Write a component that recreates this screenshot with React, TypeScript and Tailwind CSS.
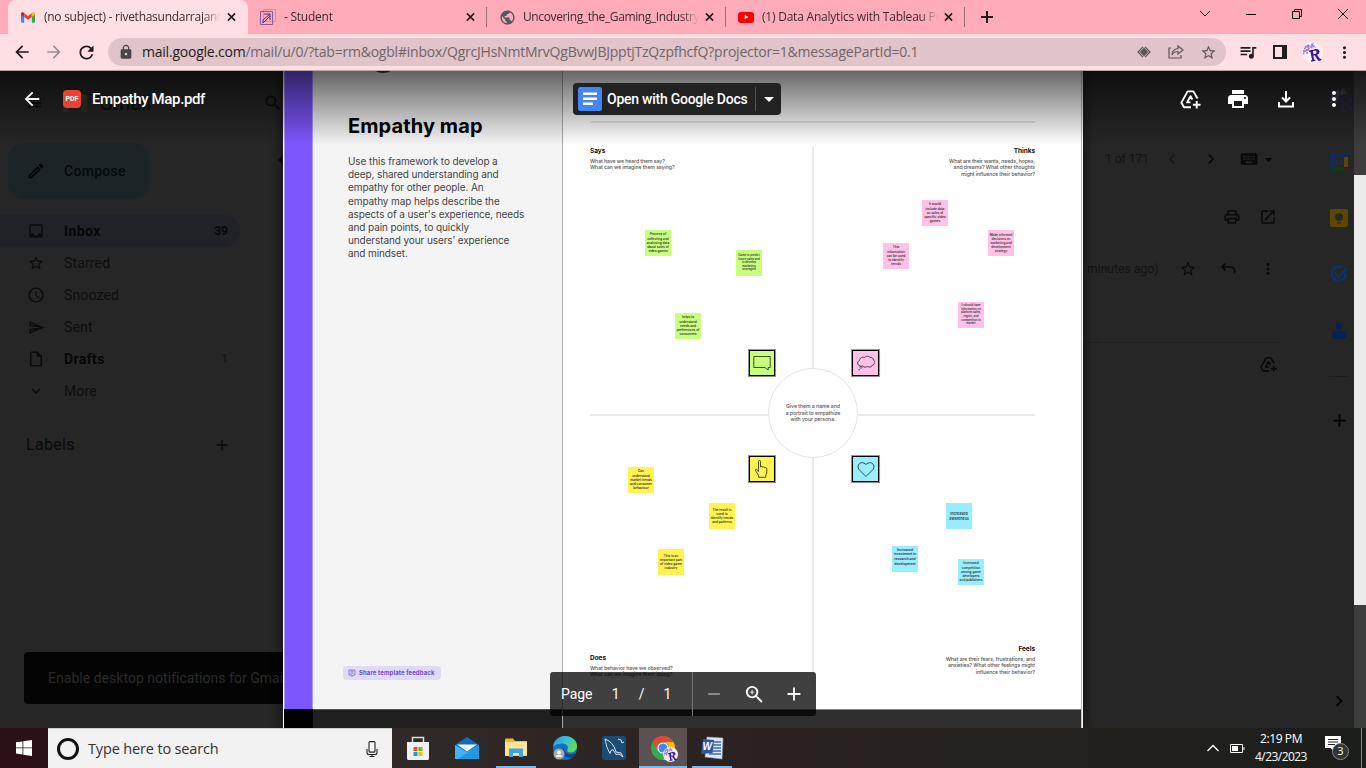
import type { ReactNode } from "react";
import { MdStarBorder, MdAccessTime, MdInbox, MdOutlineInsertDriveFile, MdPrint, MdLock, MdRefresh, MdArrowBack, MdArrowForward, MdMoreVert, MdChevronLeft, MdChevronRight, MdExpandMore, MdKeyboard, MdArrowDropDown, MdOpenInNew, MdAdd, MdRemove, MdZoomIn, MdOutlinePrint, MdPerson, MdPublic, MdMenu, MdSearch, MdOutlineEdit, MdPlayArrow, MdQueueMusic, MdOutlineSend } from "react-icons/md";

const SEGOE = "font-['Open_Sans','Noto_Sans',sans-serif]";
const ROBOTO = "font-[Roboto,'Liberation_Sans',sans-serif]";
const INTER = "font-[Inter,'Liberation_Sans',sans-serif]";

function GmailMark({ className }: { className: string }) {
  return (
    <svg viewBox="0 0 24 18" className={className}>
      <path d="M0 4v12.400C0 17.300.7 18 1.600 18h3.900V7z" fill="#4285f4" />
      <path d="M18.500 18h3.900c.9 0 1.600-.7 1.600-1.600V4l-5.500 3z" fill="#34a853" />
      <path d="M18.500 1.600v6.600L24 4.100V2.500c0-2-2.300-3.200-3.900-2z" fill="#fbbc04" />
      <path d="M5.500 8.200V1.600L12 6.500l6.500-4.900v6.600L12 13z" fill="#ea4335" />
      <path d="M0 2.500v1.600l5.500 4.100V1.600L3.900.5C2.300-.7 0 .5 0 2.500z" fill="#c5221f" />
    </svg>
  );
}

function RLetter({ className }: { className: string }) {
  return (
    <svg viewBox="0 0 22 22" className={className}>
      <g fill="none" stroke="#9b7fc9" strokeWidth="1.600">
        <path d="M2 13c-1-4 1-8 5-8M4 6l-1-2M7 5l0-3M10 4l2-3M4 9l4-3M5 12l2-5M9 6l4-2" strokeDasharray="2 .7" />
        <path d="M6 4l6 1M3 9l3 3M10 2l4 4M2 10l5-2M5 3l3 4" strokeDasharray="1.500 1" />
      </g>
      <path d="M7.500 9l6-1.500c3-.7 4.500.5 4.800 2.200.3 1.800-.9 3-2.600 3.600l3.100 4.300 1.400.1.200 1.300-3.200.8-4-5.800-1.300.3.800 4.200 1.400 0 .2 1.200-4.700 1-.2-1.200 1.200-.6-1.700-8.300-1.400 0zM11.400 9.500l.7 3.400 1.500-.4c1.200-.3 1.800-1 1.500-2-.2-1.100-1-1.500-2.200-1.300z" fill="#3c14a8" />
    </svg>
  );
}

function DriveAdd({ className }: { className: string }) {
  return (
    <svg viewBox="0 0 24 24" className={className} fill="none" stroke="currentColor" strokeWidth="2" strokeLinejoin="round">
      <path d="M12.500 20H5.200L2.500 15.300 9 3.500h6l4.300 7.500" />
      <path d="M12 15H8.500L12 8.500l2 3.500" />
      <path d="M18.500 13.500v8M14.500 17.500h8" />
    </svg>
  );
}

function CloseX() {
  return (
    <svg viewBox="0 0 10 10" className="h-2.5 w-[9px] shrink-0" stroke="#26181b" strokeWidth="1.700">
      <path d="M1 1l8 8M9 1l-8 8" />
    </svg>
  );
}

function Tab({ icon, title, active = false, width }: { icon: ReactNode; title: ReactNode; active?: boolean; width: string }) {
  return (
    <div className={`${width} relative flex h-[34px] shrink-0 items-center pl-[11px] pr-3 ${active ? "rounded-t-lg bg-[#ffdfe4]" : ""}`}>
      <div className="flex w-[18px] shrink-0 items-center justify-center">{icon}</div>
      <div className={`ml-[7px] mr-1.5 flex-1 overflow-hidden whitespace-nowrap text-[12px] leading-[18px] text-[#3c2c30] [mask-image:linear-gradient(to_right,black_90%,transparent)] ${SEGOE}`}>{title}</div>
      <CloseX />
      {!active && <span className="absolute right-0 top-[7px] h-5 w-px bg-[#9c6d76]" />}
    </div>
  );
}

function TabStrip() {
  return (
    <div className="flex h-[34px] shrink-0 bg-[#ffabb9] pl-2">
      <Tab
        active
        width="w-[240px]"
        icon={<GmailMark className="h-[11px] w-[14px]" />}
        title={<span className="tracking-[-0.27px]">(no subject) - rivethasundarrajan@gmail.com</span>}
      />
      <Tab
        width="w-[239px]"
        icon={
          <svg viewBox="0 0 16 16" className="size-4" fill="none">
            <path d="M3.500.5h12v12h-12z" stroke="#6cb6e0" />
            <path d="M.5 2.500h12v13H.5z" stroke="#8a5a98" />
            <path d="M4 5h6v6M10 5l-7 6v3l7-7" stroke="#3b3a78" />
          </svg>
        }
        title={<span className="tracking-[-0.25px]">- Student</span>}
      />
      <Tab width="w-[239px]" icon={<MdPublic className="size-[17px] text-[#55595e]" />} title={<span className="tracking-[-0.38px]">Uncovering_the_Gaming_Industry</span>} />
      <Tab
        width="w-[239px]"
        icon={
          <span className="flex h-[11px] w-4 items-center justify-center rounded-[3px] bg-[#f00]">
            <MdPlayArrow className="size-2 text-white" />
          </span>
        }
        title={<span className="tracking-[-0.22px]">(1) Data Analytics with Tableau Project</span>}
      />
      <div className="flex w-[44px] items-center justify-center">
        <svg viewBox="0 0 12 12" className="size-3" stroke="#26181b" strokeWidth="2"><path d="M6 0v12M0 6h12" /></svg>
      </div>
      <div className="ml-auto flex h-7 w-[184px]">
        <div className="flex flex-1 items-center justify-center"><svg viewBox="0 0 12 8" className="h-2 w-3" fill="none" stroke="#111"><path d="M1 1l5 5 5-5" /></svg></div>
        <div className="flex flex-1 items-center justify-center"><span className="h-px w-2.5 bg-black" /></div>
        <div className="flex flex-1 items-center justify-center"><svg viewBox="0 0 10 10" className="size-2.5" fill="none" stroke="#111"><path d="M.5 2.500h7v7h-7zM2.500 2.500v-2h7v7h-2" /></svg></div>
        <div className="flex flex-1 items-center justify-center"><svg viewBox="0 0 10 10" className="size-2.5" stroke="#111"><path d="M0 0l10 10M10 0L0 10" /></svg></div>
      </div>
    </div>
  );
}

function Toolbar() {
  return (
    <div className="flex h-[37px] shrink-0 items-center border-b border-[#b9a3a6] bg-[#ffdfe4] pl-1.5">
      <div className="flex w-8 shrink-0 justify-center"><MdArrowBack className="size-5 text-[#1f1a1c]" /></div>
      <div className="flex w-8 shrink-0 justify-center"><MdArrowForward className="size-5 text-[#a18e92]" /></div>
      <div className="flex w-8 shrink-0 justify-center"><MdRefresh className="size-[21px] text-[#1f1a1c]" /></div>
      <div className="ml-1.5 flex h-7 w-[1118px] shrink-0 items-center rounded-full bg-[#e0c4c9] pl-2.5">
        <MdLock className="size-4 text-[#4a4446]" />
        <div className={`ml-2 whitespace-nowrap text-[14px] leading-5 tracking-[-0.22px] text-[#71636a] ${SEGOE}`}>
          <span className="text-[#1f1a1c]">mail.google.com</span>/mail/u/0/?tab=rm&amp;ogbl#inbox/QgrcJHsNmtMrvQgBvwJBJpptjTzQzpfhcfQ?projector=1&amp;messagePartId=0.1
        </div>
        <div className="ml-auto flex items-center pr-0.5 text-[#5f5559]">
          <div className="flex w-8 justify-center">
            <svg viewBox="0 0 14 12" className="h-3 w-3.5" fill="none" stroke="currentColor" strokeWidth="1.200"><path d="M6 .8L1 6l5 5.200M8 .8L13 6l-5 5.200" /><path d="M7 2.500L10.500 6 7 9.500 3.500 6z" fill="currentColor" /></svg>
          </div>
          <div className="flex w-8 justify-center">
            <svg viewBox="0 0 16 14" className="h-3.5 w-4" fill="none" stroke="currentColor" strokeWidth="1.200"><path d="M3 3H1v10h12v-3M10 1l5 4-5 4V6.500C7 6.500 5 7.500 4 10c0-4 2-6 6-6.500z" /></svg>
          </div>
          <div className="flex w-8 justify-center"><MdStarBorder className="size-[17px]" /></div>
        </div>
      </div>
      <div className="ml-1.5 flex items-center text-[#241d20]">
        <div className="flex w-8 justify-center"><MdQueueMusic className="size-5" /></div>
        <div className="flex w-8 justify-center">
          <svg viewBox="0 0 14 14" className="size-3.5"><path d="M1 1h12v12H1z" fill="none" stroke="currentColor" strokeWidth="2" /><path d="M9 1h4v12H9z" fill="currentColor" /></svg>
        </div>
        <div className="flex w-8 justify-center"><span className="size-[21px] rounded-full bg-[#f7f2f6]"><RLetter className="size-[21px]" /></span></div>
        <div className="flex w-8 justify-center"><MdMoreVert className="size-[19px]" /></div>
      </div>
    </div>
  );
}

function FolderRow({ icon, label, count, active = false, bold = false }: { icon: ReactNode; label: string; count?: string; active?: boolean; bold?: boolean }) {
  return (
    <div className={`flex h-8 w-[240px] items-center rounded-r-full pl-[27px] pr-3 text-[14px] leading-5 ${active ? "bg-[#202227]" : ""} ${bold ? "font-bold text-[#070708]" : "text-[#0e0e0f]"} ${ROBOTO}`}>
      <span className="flex w-[18px] justify-center text-[#0b0b0c]">{icon}</span>
      <span className={`ml-[19px] ${bold ? "tracking-[0.4px]" : "tracking-[0.15px]"}`}>{label}</span>
      {count && <span className={`ml-auto text-[12px] ${active ? "" : "font-normal text-[#101010]"}`}>{count}</span>}
    </div>
  );
}

function MailSidebar() {
  return (
    <aside className="flex w-[283px] shrink-0 flex-col overflow-hidden bg-[#262626]">
      <div className="flex h-16 items-center pl-[26px]">
        <MdMenu className="size-5 text-[#080808]" />
        <GmailMark className="ml-5 h-5 w-7 opacity-15" />
        <span className={`ml-3 text-[20px] text-[#0e0e0e] ${ROBOTO}`}>Gmail</span>
        <MdSearch className="ml-[112px] size-5 shrink-0 text-[#0a0a0a]" />
      </div>
      <div className="mt-2 flex items-start justify-between">
        <div className={`ml-2 flex h-14 w-[142px] items-center rounded-2xl bg-[#1d2428] pl-[18px] text-[14px] font-medium tracking-[0.3px] text-[#05090b] ${ROBOTO}`}>
          <MdOutlineEdit className="size-5 text-black" />
          <span className="ml-[18px]">Compose</span>
        </div>
        <MdArrowBack className="-mr-2.5 mt-2 size-[18px] text-[#090909]" />
      </div>
      <nav className="mt-4">
        <FolderRow active bold icon={<MdInbox className="size-[18px]" />} label="Inbox" count="39" />
        <FolderRow icon={<MdStarBorder className="size-[18px]" />} label="Starred" />
        <FolderRow icon={<MdAccessTime className="size-[18px]" />} label="Snoozed" />
        <FolderRow icon={<MdOutlineSend className="size-[17px]" />} label="Sent" />
        <FolderRow icon={<MdOutlineInsertDriveFile className="size-[18px]" />} label="Drafts" count="1" bold />
        <FolderRow icon={<MdExpandMore className="size-[18px]" />} label="More" />
      </nav>
      <div className={`mt-[27px] flex h-[22px] w-[231px] items-center justify-between pl-[26px] text-[16px] tracking-[0.3px] text-[#0a0a0a] ${ROBOTO}`}>
        <span>Labels</span>
        <MdAdd className="size-[18px]" />
      </div>
      <div className={`ml-6 mt-[196px] flex h-[52px] w-[300px] items-center whitespace-nowrap rounded bg-[#040404] pl-6 text-[14px] tracking-[0.03px] text-[#2a2a2a] ${ROBOTO}`}>
        Enable desktop notifications for Gmail
      </div>
    </aside>
  );
}

function MailPane() {
  return (
    <section className={`flex w-[271px] shrink-0 bg-[#262626] text-[#090909] ${ROBOTO}`}>
      <div className="w-[228px] pt-[76px]">
        <div className="flex h-6 items-center pl-[22px]">
          <span className="w-[56px] text-[12px] text-[#141414]">1 of 171</span>
          <MdChevronLeft className="ml-px size-5 text-[#161616]" />
          <MdChevronRight className="ml-[19px] size-5" />
          <MdKeyboard className="ml-[18px] size-5" />
          <MdArrowDropDown className="size-[19px]" />
        </div>
        <div className="mt-[34px] flex h-6 items-center justify-end gap-[18px] pr-[34px]">
          <MdOutlinePrint className="size-[18px]" />
          <MdOpenInNew className="size-[18px]" />
        </div>
        <div className="mt-7 flex h-6 items-center pl-1">
          <span className="w-[88px] whitespace-nowrap text-[12px] tracking-[0.1px] text-[#121212]">minutes ago)</span>
          <MdStarBorder className="ml-1 size-[18px]" />
          <svg viewBox="0 0 16 14" className="ml-[23px] h-3.5 w-4" fill="none" stroke="currentColor" strokeWidth="1.700"><path d="M5.500 1.500L2 5l3.500 3.500M2 5h8.500c2.500 0 4 1.500 4 4v2.500" /></svg>
          <MdMoreVert className="ml-[23px] size-[18px]" />
        </div>
        <div className="mr-8 mt-[61px] border-t border-dotted border-[#1b1b1b]" />
        <div className="mt-3 flex justify-end pr-[33px]"><DriveAdd className="size-[19px]" /></div>
      </div>
      <div className="flex w-[43px] flex-col items-center pl-[13px] pt-[82px]">
        <svg viewBox="0 0 18 18" className="size-[18px]">
          <path d="M0 0h18v4H0z" fill="#102a59" /><path d="M0 4h4v10H0z" fill="#102a59" /><path d="M14 4h4v10h-4z" fill="#5c4603" /><path d="M0 14h14v4H0z" fill="#0d3a1a" /><path d="M14 14h4l-4 4z" fill="#4a1511" />
          <text x="9" y="12" textAnchor="middle" fontSize="8" fontFamily="Roboto" fill="#14346c">31</text>
        </svg>
        <svg viewBox="0 0 18 18" className="mt-[38px] size-[18px]"><rect width="18" height="18" rx="2" fill="#5c4702" /><circle cx="9" cy="8" r="4" fill="#2e2a18" /><path d="M7 13h4v1.500H7z" fill="#2e2a18" /></svg>
        <svg viewBox="0 0 18 18" className="mt-[38px] size-[18px]" fill="none" stroke="#103260" strokeWidth="2.500"><path d="M15.500 7.500A7 7 0 1 1 12.500 3" /><path d="M5 8l4 4 8-9" /></svg>
        <svg viewBox="0 0 14 18" className="mt-[39px] h-[18px] w-3.5" fill="#082155"><circle cx="7" cy="4" r="3.500" /><path d="M3 9h8c2 0 3 1.500 3 3.500V15c0 1-.7 2-2 2H2c-1.300 0-2-1-2-2v-2.500C0 10.500 1 9 3 9z" /></svg>
        <span className="mt-9 h-px w-5 bg-[#1d1d1d]" />
        <MdAdd className="mt-[33px] size-[21px] shrink-0 text-black" />
        <MdChevronRight className="mt-[259px] size-[22px] shrink-0 text-black" />
      </div>
    </section>
  );
}

type Note = { pos: string; lines: string[]; size?: string };

const GREEN: Note[] = [
  { pos: "left-[82px] top-[159px]", lines: ["Process of", "collecting and", "analysing data", "about sales of", "video games"] },
  { pos: "left-[173px] top-[179px]", size: "text-[2.8px] leading-[3.6px]", lines: ["Game to predict", "future sales and", "to develop", "marketing", "strategies"] },
  { pos: "left-[112px] top-[242px]", lines: ["helps to", "understand", "needs and", "preferences of", "consumers"] },
];
const PINK: Note[] = [
  { pos: "left-[359px] top-[129px]", lines: ["It would", "include data", "on sales of", "specific video", "games"] },
  { pos: "left-[425px] top-[159px]", size: "text-[3.1px] leading-[4.1px]", lines: ["Make informed", "decisions on", "marketing and", "development", "strategy"] },
  { pos: "left-[320px] top-[172px]", lines: ["This", "information", "can be used", "to identify", "trends"] },
  { pos: "left-[395px] top-[231px]", size: "text-[2.8px] leading-[3.6px]", lines: ["It should have", "information on", "platform sales,", "region, and", "competition in", "market"] },
];
const YELLOW: Note[] = [
  { pos: "left-[65px] top-[396px]", lines: ["Can", "understand", "market trends", "and consumer", "behaviour"] },
  { pos: "left-[146px] top-[432px]", lines: ["The result is", "used to", "identify trends", "and patterns"] },
  { pos: "left-[95px] top-[478px]", lines: ["This is an", "important part", "of video game", "industry"] },
];
const CYAN: Note[] = [
  { pos: "left-[383px] top-[432px]", size: "text-[3.7px] leading-[5px]", lines: ["Increased", "awareness"] },
  { pos: "left-[329px] top-[475px]", size: "text-[3.4px] leading-[4.6px] pb-1", lines: ["Increased", "investment in", "research and", "development"] },
  { pos: "left-[395px] top-[488px]", size: "text-[3.2px] leading-[4.2px]", lines: ["Increased", "competition", "among game", "developers", "and publishers"] },
];

function Notes({ items, color }: { items: Note[]; color: string }) {
  return (
    <>
      {items.map((n) => (
        <div key={n.pos} className={`absolute flex size-[26px] flex-col items-center justify-center whitespace-nowrap font-semibold text-[#333] ${n.pos} ${color} ${n.size ?? "text-[3.2px] leading-[4.2px]"}`}>
          {n.lines.map((l) => <span key={l}>{l}</span>)}
        </div>
      ))}
    </>
  );
}

function Tile({ pos, children }: { pos: string; children: ReactNode }) {
  return (
    <div className={`absolute flex h-[26px] items-center justify-center border border-black shadow-sm outline-[0.5px] outline-black/40 ${pos}`}>
      <svg viewBox="0 0 18 18" className="size-[18px]" fill="none" stroke="#222" strokeWidth=".8">{children}</svg>
    </div>
  );
}

function Corner({ pos, title, lines }: { pos: string; title: string; lines: string[] }) {
  return (
    <div className={`absolute whitespace-nowrap text-[5.2px] font-medium leading-[6.7px] tracking-[-0.09px] text-[#555] ${pos}`}>
      <div className="mb-[2.5px] text-[6.5px] font-bold leading-[8px] tracking-[-0.05px] text-[#111]">{title}</div>
      {lines.map((l) => <div key={l}>{l}</div>)}
    </div>
  );
}

function PdfPage() {
  return (
    <main className={`z-[1] flex w-[800px] shrink-0 border-x border-white bg-white shadow-[0_0_10px_2px_rgba(0,0,0,0.45)] ${INTER}`}>
      <div className="w-[29px] shrink-0">
        <div className="h-[638px] border-x border-[#a995ff] bg-[#7b57fe]" />
        <div className="h-[19px] bg-black" />
      </div>
      <div className="flex w-[249px] shrink-0 flex-col bg-[#f4f4f4]">
        <div className="relative flex h-[638px] flex-col overflow-hidden pl-[35px] pt-[42px]">
          <span className="absolute left-[55px] top-[-28px] size-[30px] rounded-full bg-[#35325e]" />
          <h1 className="text-[20px] font-bold leading-[26px] tracking-[0.1px] text-black">Empathy map</h1>
          <p className="mt-[16px] whitespace-pre text-[10px] leading-[13.2px] tracking-[-0.1px] text-[#444]">
            {"Use this framework to develop a\ndeep, shared understanding and\nempathy for other people. An\nempathy map helps describe the\naspects of a user's experience, needs\nand pain points, to quickly\nunderstand your users’ experience\nand mindset."}
          </p>
          <div className="mb-[29px] ml-[-5px] mt-auto flex h-3.5 w-[98px] items-center rounded-sm bg-[#e0daf6] pl-[5px] text-[#6b4ed0]">
            <svg viewBox="0 0 8 8" className="size-2" fill="none" stroke="currentColor" strokeWidth=".7"><path d="M1 1h6v5H5.500L4 7.500V6H1zM2.500 2.700h3M2.500 4.200h3" /></svg>
            <span className="ml-[3px] whitespace-nowrap text-[6px] font-bold leading-[8px] tracking-[0.1px]">Share template feedback</span>
          </div>
        </div>
        <div className="h-[19px] border-t border-[#555] bg-[#1f1f1f]" />
      </div>
      <div className="w-px shrink-0 bg-[#aaa]" />
      <div className="flex flex-1 flex-col">
        <div className="relative h-[638px] bg-white">
          <span className="absolute left-[27px] top-[50px] h-[2px] w-[445px] bg-[#e6e6e6]" />
          <span className="absolute left-[249px] top-[75px] h-[540px] w-[2px] bg-[#e9e9e9]" />
          <span className="absolute left-[27px] top-[343px] h-[2px] w-[445px] bg-[#e9e9e9]" />
          <div className="absolute left-[205px] top-[297px] flex size-[90px] items-center justify-center whitespace-pre rounded-full border-[1.5px] border-[#e4e4e4] bg-white text-center text-[5.2px] font-medium leading-[6.6px] tracking-[-0.06px] text-[#555]">
            {"Give them a name and\na portrait to empathize\nwith your persona."}
          </div>
          <Corner pos="left-[27px] top-[76px]" title="Says" lines={["What have we heard them say?", "What can we imagine them saying?"]} />
          <Corner pos="right-[46px] top-[76px] text-right" title="Thinks" lines={["What are their wants, needs, hopes,", "and dreams? What other thoughts", "might influence their behavior?"]} />
          <Corner pos="left-[27px] top-[583px]" title="Does" lines={["What behavior have we observed?", "What can we imagine them doing?"]} />
          <Corner pos="right-[46px] top-[574px] text-right" title="Feels" lines={["What are their fears, frustrations, and", "anxieties? What other feelings might", "influence their behavior?"]} />
          <Notes items={GREEN} color="bg-[#c8ff7d]" />
          <Notes items={PINK} color="bg-[#ffc1e8]" />
          <Notes items={YELLOW} color="bg-[#fff352]" />
          <Notes items={CYAN} color="bg-[#98edff]" />
          <Tile pos="left-[186px] top-[279px] w-[26px] bg-[#c8ff7d]"><path d="M.8 2.500h16.400v11h-2V16L12 13.500H.8z" /></Tile>
          <Tile pos="left-[289px] top-[279px] w-[27px] bg-[#ffc1e8]"><path d="M3 12C0 11 0 7.500 2.500 6.500 2.500 4 5.500 2.500 7.500 3.500c1.500-2 5-1.500 5.500 0 2-.3 3.500.8 3.300 2.500 2.500 1.200 1.800 4.500-.8 5-.5 2-3.200 2.500-5 1.500-1.500 1-3.800.8-4.800-.5-.9.3-2 .3-2.700 0zM4 12.300l1 1.200-1 1-1-1zM1.500 15.700h1.500" /></Tile>
          <Tile pos="left-[186px] top-[385px] w-[26px] bg-[#fff352]"><path d="M5.500 9.500V1.500c0-1.400 2-1.400 2 0V7c.5-.9 2-.8 2.200.3.500-.8 1.900-.6 2.100.4.6-.6 2-.2 2 1V13l-1 2v2.300H5.500V15.300L2.500 10.500c-.6-1.200.8-1.800 1.500-1l1.500 2z" /></Tile>
          <Tile pos="left-[289px] top-[385px] w-[27px] bg-[#98edff]"><path d="M9 16.500L2 9.500C-.8 6 3-.5 9 4.500c6-5 9.800 1.500 7 5z" /></Tile>
        </div>
        <div className="h-[19px] border-t border-[#888] bg-[#2f2f2f]" />
      </div>
      <div className="w-px shrink-0 bg-[#bbb]" />
    </main>
  );
}

function ViewerHeader() {
  return (
    <header className={`absolute inset-x-0 top-0 z-10 flex h-[74px] items-start bg-linear-to-b from-black/60 to-transparent text-white ${ROBOTO}`}>
      <div className="flex h-14 w-[573px] items-center pl-[21px]">
        <MdArrowBack className="size-[22px]" />
        <span className="ml-[20px] flex h-[18px] w-[18px] items-center justify-center rounded-sm bg-[#ea4335] text-[7px] font-bold">PDF</span>
        <span className="ml-[11px] text-[15px] font-medium tracking-[-0.36px]">Empathy Map.pdf</span>
      </div>
      <div className="mt-3 flex h-8 w-[208px] items-center rounded-sm bg-[#222] pl-[5px]">
        <svg viewBox="0 0 24 24" className="size-6 shrink-0"><rect width="24" height="24" rx="2.500" fill="#4285f4" /><path d="M5 5.500h14v2.500H5zM5 10.500h14v2.500H5zM5 15.500h10v2.500H5z" fill="#fff" /></svg>
        <span className="ml-[5px] whitespace-nowrap text-[14px] font-medium tracking-[-0.25px]">Open with Google Docs</span>
        <span className="ml-auto h-6 w-px bg-[#555]" />
        <span className="flex w-[25px] justify-center"><svg viewBox="0 0 10 5" className="h-[5px] w-2.5"><path d="M0 0h10L5 5z" fill="#fff" /></svg></span>
      </div>
      <div className="relative ml-auto flex h-14 items-center pr-2">
        <RLetter className="absolute right-[9px] top-4 size-7 opacity-15" />
        <div className="flex w-12 justify-center"><DriveAdd className="size-[23px]" /></div>
        <div className="flex w-12 justify-center"><MdPrint className="size-6" /></div>
        <div className="flex w-12 justify-center">
          <svg viewBox="0 0 18 18" className="size-[18px]" fill="none" stroke="currentColor" strokeWidth="2"><path d="M9 1v10M5 7.500l4 4 4-4M2 12v4.500h14V12" /></svg>
        </div>
        <div className="flex w-12 justify-center"><MdMoreVert className="size-6" /></div>
      </div>
    </header>
  );
}

function PageControls() {
  return (
    <div className={`absolute left-[550px] top-[601px] z-10 flex h-11 w-[266px] items-center rounded-[3px] bg-black/75 text-[14px] text-white ${ROBOTO}`}>
      <span className="w-[58px] pl-[11px] tracking-[-0.1px]">Page</span>
      <span className="w-4 text-center">1</span>
      <span className="w-[36px] text-center">/</span>
      <span className="w-4 text-center">1</span>
      <span className="ml-4 h-full w-px bg-[#777]" />
      <span className="flex w-[44px] justify-center"><MdRemove className="size-5 text-[#999]" /></span>
      <span className="flex w-9 justify-center"><MdZoomIn className="size-[23px]" /></span>
      <span className="flex w-[44px] justify-center"><MdAdd className="size-[22px]" /></span>
    </div>
  );
}

function TaskApp({ children, open = false, active = false }: { children: ReactNode; open?: boolean; active?: boolean }) {
  return (
    <div className={`relative flex h-10 w-12 items-center justify-center ${active ? "bg-[#5a5150]" : ""}`}>
      {children}
      {(open || active) && <span className={`absolute bottom-0 h-0.5 bg-[#76b9ed] ${active ? "inset-x-0" : "inset-x-1"}`} />}
    </div>
  );
}

function Taskbar() {
  return (
    <footer className="flex h-10 shrink-0 bg-linear-to-r from-[#333] via-[#2c2321] to-[#1c1e1c] text-white">
      <div className="flex w-12 items-center justify-center bg-[#2c1017]">
        <svg viewBox="0 0 16 16" className="size-4" fill="#fff"><path d="M0 2.300l6.500-.9v6.100H0zM7.300 1.300L16 0v7.500H7.300zM0 8.300h6.500v6.100L0 13.500zM7.300 8.300H16V16l-8.700-1.200z" /></svg>
      </div>
      <div className="flex w-[344px] items-center border-t border-[#ccc] bg-[#f2f2f2] pl-[9px]">
        <span className="size-[22px] rounded-full border-[3px] border-[#111]" />
        <span className={`ml-[9px] text-[14.5px] tracking-[-0.15px] text-[#333] ${SEGOE}`}>Type here to search</span>
        <svg viewBox="0 0 12 16" className="ml-auto mr-[14px] h-4 w-3" fill="none" stroke="#222" strokeWidth="1.100"><rect x="3" y=".6" width="6" height="10.500" rx="1" /><path d="M1 8v3.500c0 1 1 2 2 2h6c1 0 2-1 2-2V8M6 13.500v2M3.500 15.500h5" /></svg>
      </div>
      <div className="ml-0.5 flex gap-px">
        <TaskApp>
          <svg viewBox="0 0 24 24" className="size-6"><path d="M6.500 6V1.500h11V6" fill="none" stroke="#ddd" strokeWidth="1.500" /><path d="M1 6h22v16.500c0 .8-.5 1.500-1.500 1.500h-19C1.500 24 1 23.300 1 22.500z" fill="#f0f0f0" /><path d="M7.500 11h4v4h-4z" fill="#f25022" /><path d="M12.500 11h4v4h-4z" fill="#7fba00" /><path d="M7.500 16h4v4h-4z" fill="#00a4ef" /><path d="M12.500 16h4v4h-4z" fill="#ffb900" /></svg>
        </TaskApp>
        <TaskApp>
          <svg viewBox="0 0 24 24" className="size-6"><path d="M0 9l12-8 12 8v14H0z" fill="#0f6cbd" /><path d="M0 9l12 7L24 9v14H0z" fill="#3cb5f0" /><path d="M24 9v14H3z" fill="#2196e3" /><path d="M2 8.500h20L12 15.500z" fill="#f4f4f4" /></svg>
        </TaskApp>
        <TaskApp open>
          <svg viewBox="0 0 22 20" className="h-5 w-[22px]"><path d="M0 2c0-1 .5-1.500 1.500-1.500H8L10 3h12v15H0z" fill="#e9b83c" /><path d="M0 4h22v13.500H0z" fill="#ffe493" /><path d="M4 19v-8.500h14V19h-4v-4H8v4z" fill="#3ba7e4" /></svg>
        </TaskApp>
        <TaskApp>
          <svg viewBox="0 0 24 24" className="size-6">
            <defs><linearGradient id="edge" x1="0" y1="0" x2="1" y2=".5"><stop stopColor="#2499e0" /><stop offset=".55" stopColor="#36c3d8" /><stop offset="1" stopColor="#62dc50" /></linearGradient></defs>
            <circle cx="12" cy="12" r="12" fill="#176fc1" /><path d="M0 11C1 4 6 0 12 0c7 0 12 4.500 12 10 0 4-3 6.500-6.500 6.500-3 0-4-1.500-3-3 1.500-3-1-6-5-6S1.500 9 0 11z" fill="url(#edge)" /><path d="M23 17c-4 2.500-12 2-12-5-2.500 3-1 10 6.500 10 3-1 4.500-3 5.500-5z" fill="#12447f" /><circle cx="6" cy="18" r="5.500" fill="#aaa" /><circle cx="6" cy="16.500" r="2" fill="#eee" /><path d="M2.500 21c.5-3 6.500-3 7 0" fill="#eee" />
          </svg>
        </TaskApp>
        <TaskApp>
          <svg viewBox="0 0 24 24" className="size-6"><rect width="24" height="24" rx="3" fill="#1c4c73" /><path d="M3 3l4 2c4 3 6 7 7 11l5 1 2 4-4-3-3 .5c-1-2-2-3-3-5l-2 1-1 3-2-4C4 10 4 6 3 3zM16 3l3 1 1 3 2-1" fill="none" stroke="#d6e5ef" strokeWidth="1" /></svg>
        </TaskApp>
        <TaskApp active>
          <svg viewBox="0 0 24 24" className="size-6"><circle cx="12" cy="12" r="12" fill="#34a853" /><path d="M1.600 6A12 12 0 0 1 22.400 6H12a6 6 0 0 0-5.200 9z" fill="#ea4335" /><path d="M22.400 6A12 12 0 0 1 12 24l5.200-9A6 6 0 0 0 12 6z" fill="#fbbc04" /><circle cx="12" cy="12" r="5.600" fill="#fff" /><circle cx="12" cy="12" r="4.500" fill="#4285f4" /></svg>
          <span className="absolute bottom-[6px] right-[9px] size-[15px] rounded-full bg-[#f3edf5]"><RLetter className="size-[15px]" /></span>
        </TaskApp>
        <TaskApp open>
          <svg viewBox="0 0 24 24" className="size-6"><path d="M7 1l16 1-1 21L5 21z" fill="#dfe8f4" stroke="#8ea9cf" strokeWidth=".6" /><path d="M13 6h8M13 9h8M13 12h8M10 15h11M9 18h12" stroke="#3a69b2" strokeWidth="1.300" /><path d="M3 3l11 1-1.500 13L1 18z" fill="#2a579f" /><text x="2.500" y="14" fontSize="10" fontWeight="bold" fontStyle="italic" fontFamily="Liberation Sans" fill="#fff">W</text></svg>
        </TaskApp>
      </div>
      <div className="ml-auto flex items-center">
        <svg viewBox="0 0 12 8" className="h-2 w-3" fill="none" stroke="#fff" strokeWidth="1.300"><path d="M.5 7L6 1.500 11.500 7" /></svg>
        <svg viewBox="0 0 15 9" className="ml-[11px] h-[9px] w-[15px]" fill="none" stroke="#fff"><path d="M.5.5h12v8H.5z" /><path d="M2 2h6v5H2z" fill="#fff" stroke="none" /><path d="M14 3v3" /></svg>
        <div className={`ml-2 w-[56px] whitespace-nowrap text-center text-[12px] leading-[18px] tracking-[-0.4px] ${SEGOE}`}>
          <div>2:19 PM</div>
          <div className="tracking-[-0.55px]">4/23/2023</div>
        </div>
        <div className="relative ml-4 mr-3 h-6 w-6">
          <svg viewBox="0 0 16 16" className="size-4"><path d="M0 0h16v12H8.500v3L5.500 12H0z" fill="#fff" /><path d="M3 3.500h10M3 6h10M3 8.500h7" stroke="#222" /></svg>
          <span className={`absolute bottom-0 right-0 flex size-[17px] items-center justify-center rounded-full border border-[#888] bg-[#333] text-[11px] ${SEGOE}`}>3</span>
        </div>
        <span className="mr-1 h-10 w-px bg-[#888]" />
      </div>
    </footer>
  );
}

export default function App() {
  return (
    <div className="flex h-[768px] w-[1366px] flex-col overflow-hidden bg-[#262626]">
      <TabStrip />
      <Toolbar />
      <div className="relative flex h-[657px] shrink-0 overflow-hidden">
        <MailSidebar />
        <PdfPage />
        <MailPane />
        <div className="z-[1] w-3 shrink-0 bg-[#3d3d3d] pt-[104px]"><div className="h-[430px] bg-[#ebebeb]" /></div>
        <ViewerHeader />
        <PageControls />
      </div>
      <Taskbar />
    </div>
  );
}
